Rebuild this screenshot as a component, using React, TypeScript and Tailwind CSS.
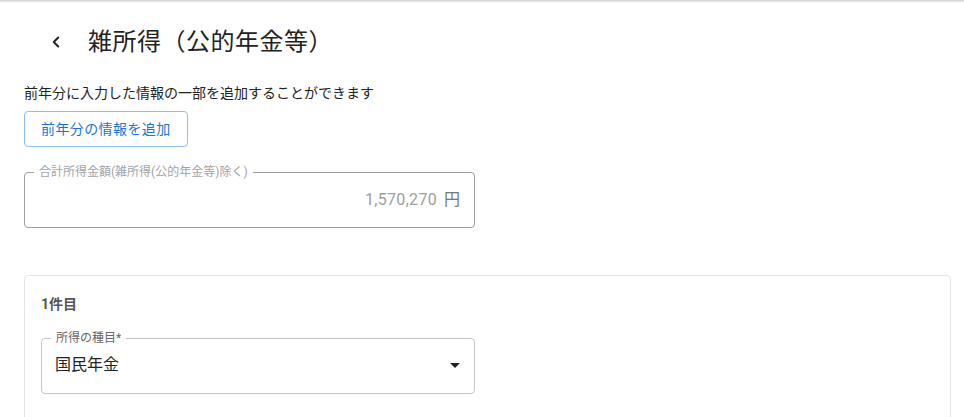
import { ChevronLeft } from 'lucide-react';

const FONT = 'font-["Roboto","Noto_Sans_CJK_JP",sans-serif]';

function OutlinedBox({
  label,
  className,
  labelClass,
  borderClass,
  children,
}: {
  label: string;
  className: string;
  labelClass: string;
  borderClass: string;
  children: React.ReactNode;
}) {
  return (
    <div className={`relative h-[56px] rounded-[4px] border ${borderClass} ${className}`}>
      {/* floating label sits over the top border */}
      <span
        className={`absolute left-[9px] top-[-8px] bg-white px-[5px] text-[12px] leading-[14px] ${labelClass}`}
      >
        {label}
      </span>
      {children}
    </div>
  );
}

export default function App() {
  return (
    <div className={`min-h-[417px] bg-white ${FONT} text-[#212121]`}>
      <div className="h-[3px] bg-gradient-to-b from-[#cfcfcf] to-white" />

      {/* Header */}
      <div className="flex h-[77px] items-center pl-[40px]">
        <button className="flex h-[32px] w-[32px] items-center justify-center text-[#222]">
          <ChevronLeft className="h-[18px] w-[18px]" strokeWidth={2.6} />
        </button>
        <h1 className="ml-4 text-[24px] leading-none tracking-[0.5px] text-[#222]">
          雑所得（公的年金等）
        </h1>
      </div>

      <div className="pl-[24px] pr-[13px]">
        <p className="mt-[3px] text-[14px] leading-[20px] text-[#222]">
          前年分に入力した情報の一部を追加することができます
        </p>

        <button className="mt-[8px] h-[36px] rounded-[4px] border border-[#8fbdec] px-[16px] text-[14px] font-normal tracking-[0.4px] text-[#1976d2]">
          前年分の情報を追加
        </button>

        <OutlinedBox
          label="合計所得金額(雑所得(公的年金等)除く)"
          className="mt-[25px] w-[451px]"
          labelClass="text-[#a3a3a3]"
          borderClass="border-[#9e9e9e]"
        >
          <div className="flex h-full items-center justify-end pr-[14px] text-[16px] text-[#9e9e9e]">
            <span className="tracking-[0.3px]">1,570,270</span>
            <span className="ml-[7px] text-[#777]">円</span>
          </div>
        </OutlinedBox>

        {/* Entry card */}
        <div className="mt-[47px] h-[150px] rounded-[4px] border border-[#e3e3e3] px-[16px] pt-[20px]">
          <div className="text-[14px] font-bold leading-[16px] text-[#555]">1件目</div>

          <OutlinedBox
            label="所得の種目*"
            className="mt-[26px] w-[434px]"
            labelClass="text-[#666]"
            borderClass="border-[#c4c4c4]"
          >
            <div className="flex h-full items-center justify-between pl-[13px] pr-[7px] text-[16px] text-[#222]">
              <span className="mt-[-2px]">国民年金</span>
              <svg viewBox="0 0 24 24" className="mt-[-2px] h-[24px] w-[24px] text-[#222]">
                <path d="M7 10l5 5 5-5z" fill="currentColor" />
              </svg>
            </div>
          </OutlinedBox>
        </div>
      </div>
    </div>
  );
}
